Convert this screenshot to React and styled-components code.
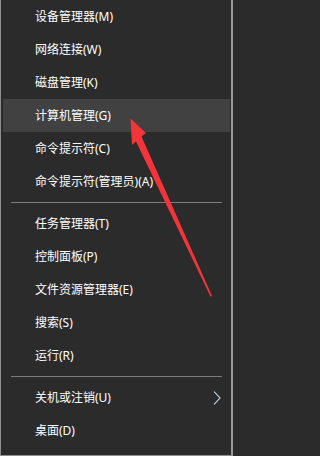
import styled, { createGlobalStyle } from 'styled-components';

const GlobalStyle = createGlobalStyle`
  html, body {
    margin: 0;
    padding: 0;
    background: #2b2b2b;
  }
  * {
    box-sizing: border-box;
  }
`;

const Menu = styled.nav`
  position: relative;
  width: 233px;
  height: 456px;
  background-color: #2b2b2b;
  border-left: 1px solid #8f8f8f;
  border-right: 2px solid #9a9a9a;
  border-bottom: 1px solid #8f8f8f;
  overflow: hidden;
  font-family: 'Noto Sans', 'Noto Sans CJK SC', sans-serif;
  font-size: 12px;
  color: #ffffff;
`;

const Item = styled.div`
  display: flex;
  align-items: center;
  justify-content: space-between;
  height: 33px;
  margin: 0 1px 0 2px;
  padding: 0 9px 0 32px;
  background-color: ${(props) => (props.$active ? '#414141' : 'transparent')};
  white-space: nowrap;
`;

const Label = styled.span`
  line-height: 1;
`;

const Separator = styled.div`
  display: flex;
  align-items: flex-start;
  height: 9px;
  padding: 4px 9px 0 10px;
  &::after {
    content: '';
    flex: 1;
    height: 1px;
    background-color: #7c7c7c;
  }
`;

const Chevron = styled.svg`
  width: 8px;
  height: 14px;
  flex-shrink: 0;
`;

const Pointer = styled.svg`
  position: absolute;
  left: 0;
  top: 0;
  pointer-events: none;
`;

const groups = [
  [
    { label: '设备管理器(M)' },
    { label: '网络连接(W)' },
    { label: '磁盘管理(K)' },
    { label: '计算机管理(G)', active: true },
    { label: '命令提示符(C)' },
    { label: '命令提示符(管理员)(A)' },
  ],
  [
    { label: '任务管理器(T)' },
    { label: '控制面板(P)' },
    { label: '文件资源管理器(E)' },
    { label: '搜索(S)' },
    { label: '运行(R)' },
  ],
  [{ label: '关机或注销(U)', submenu: true }, { label: '桌面(D)' }],
];

function App() {
  return (
    <>
      <GlobalStyle />
      <Menu>
        {groups.map((group, i) => (
          <div key={i}>
            {i > 0 && <Separator />}
            {group.map((item) => (
              <Item key={item.label} $active={item.active}>
                <Label>{item.label}</Label>
                {item.submenu && (
                  <Chevron viewBox="0 0 8 14">
                    <polyline
                      points="1,0.5 7,7 1,13.5"
                      fill="none"
                      stroke="#d8e6f2"
                      strokeWidth="1.1"
                    />
                  </Chevron>
                )}
              </Item>
            ))}
          </div>
        ))}
        <Pointer width="233" height="456" viewBox="0 0 233 456">
          <polygon
            points="129.5,118.5 145,133 140.5,136.5 211,296 209.5,296.5 135,141.5 131,145"
            fill="#f5343a"
          />
        </Pointer>
      </Menu>
    </>
  );
}

export default App;
